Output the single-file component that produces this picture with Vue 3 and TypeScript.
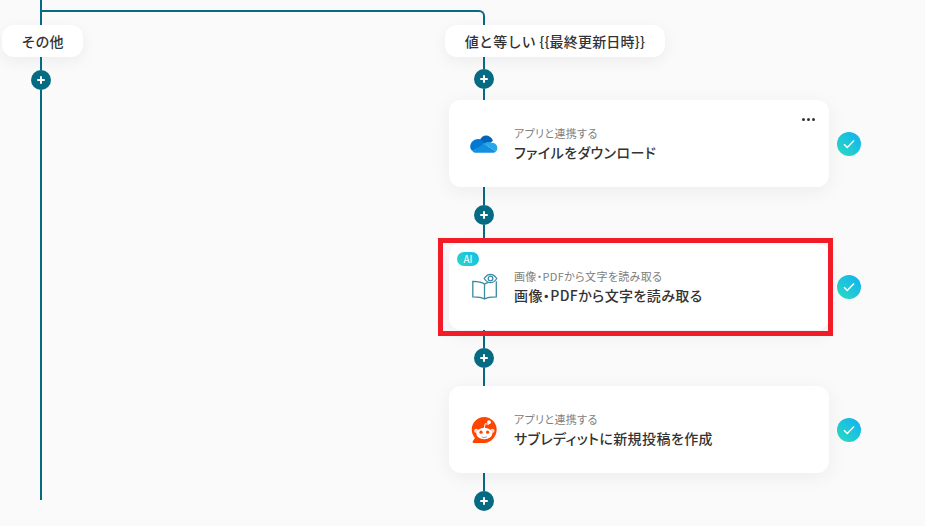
<script setup lang="ts">
interface Step {
  id: string
  icon: 'onedrive' | 'book' | 'reddit'
  caption: string
  title: string
  menu?: boolean
  ai?: boolean
}

const condition = '値と等しい {{最終更新日時}}'

const steps: Step[] = [
  { id: 'download', icon: 'onedrive', caption: 'アプリと連携する', title: 'ファイルをダウンロード', menu: true },
  { id: 'ocr', icon: 'book', caption: '画像・PDFから文字を読み取る', title: '画像・PDFから文字を読み取る', ai: true },
  { id: 'post', icon: 'reddit', caption: 'アプリと連携する', title: 'サブレディットに新規投稿を作成' },
]
</script>

<template>
  <div class="canvas">
    <div class="stub"></div>
    <div class="branch-line"></div>

    <div class="columns">
      <section class="col-left">
        <div class="pill pill-other">その他</div>
        <div class="rail">
          <span class="line h13"></span>
          <button class="plus"><span class="cross"></span></button>
          <span class="line h410"></span>
        </div>
      </section>

      <section class="col-right">
        <div class="pill pill-cond">{{ condition }}</div>
        <div class="rail">
          <span class="line h12"></span>
          <button class="plus"><span class="cross"></span></button>
          <span class="line h11"></span>
        </div>

        <template v-for="(step, i) in steps" :key="step.id">
          <div class="step-row">
            <article class="card">
              <span v-if="step.ai" class="ai-badge">AI</span>
              <span v-if="step.ai" class="highlight"></span>
              <span v-if="step.menu" class="menu"><i></i><i></i><i></i></span>

              <div class="icon">
                <svg v-if="step.icon === 'onedrive'" width="28" height="20" viewBox="0 0 28 20">
                  <path d="M9.500 6.600C11 3.300 13.300 1.500 16 1.500c3 0 5.800 2 7 5.200L17 11 9.500 8z" fill="#0364b8" />
                  <path d="M8.500 5C4 5 .2 8.300.2 12.800c0 1.800.9 3.300 2.300 4.300L12 12l2-3.500C12.600 6.300 10.700 5 8.500 5z" fill="#0078d4" />
                  <path d="M2.500 17.100 14 9.500l12 8c-1 1-2 1.300-3 1.300H5c-1 0-1.900-.6-2.500-1.700z" fill="#1490df" />
                  <path d="M14 9.500c1-.7 2.500-1.500 4-1.500 1.500 0 2.800.3 4 .8 3 0 5.300 2.200 5.300 5.200 0 1.500-.5 2.700-1.300 3.500z" fill="#28a8ea" />
                </svg>

                <svg v-else-if="step.icon === 'book'" class="book" width="30" height="30" viewBox="-1 1.5 30 30">
                  <path d="M14.500 13.500C12 11.500 8 10.800 2.800 10.800V26.300C8 26.300 12 26.800 14.500 28.500 17 26.800 21 26.300 26.300 26.300V10.800" />
                  <path d="M14.500 13.500V28.500" />
                  <path d="M14.500 13.500C15.500 12.800 16.800 12.200 18.500 11.800" />
                  <path d="M14.200 8C16 5.300 18.300 3.800 20.500 3.800S25 5.300 26.800 8C25 10.700 22.700 12.200 20.500 12.200S16 10.700 14.200 8Z" />
                  <circle cx="20.500" cy="8" r="2.300" />
                </svg>

                <svg v-else width="26" height="28" viewBox="0 0 26 28">
                  <path d="M13.200 1C6.300 1 .7 6.600.7 13.500c0 3.200 1.200 6.200 3.200 8.400L1.800 25.200c-.5.8.1 1.800 1 1.800H13.200c6.900 0 12.500-6.600 12.500-13.500S20.100 1 13.200 1z" fill="#ff4500" />
                  <path d="M13.300 12l.9-4.300 3.800.6" fill="none" stroke="#fff" stroke-width="1" />
                  <circle cx="18" cy="6.200" r="1.900" fill="#fff" />
                  <circle cx="5.200" cy="14.800" r="2.100" fill="#ffd9cc" />
                  <circle cx="21.400" cy="14.800" r="2.100" fill="#ffd9cc" />
                  <ellipse cx="13.300" cy="17.500" rx="8" ry="5.700" fill="#fff" />
                  <circle cx="10" cy="16.200" r="1.600" fill="#ff4500" />
                  <circle cx="16.600" cy="16.200" r="1.600" fill="#ff4500" />
                  <path d="M10.300 20c1.800 1.200 4.200 1.200 6 0-.6 1.600-1.800 2.100-3 2.100s-2.400-.5-3-2.100z" fill="#9aa5ad" />
                </svg>
              </div>

              <div class="labels">
                <p class="caption">{{ step.caption }}</p>
                <p class="title">{{ step.title }}</p>
              </div>
            </article>

            <span class="check">
              <svg width="12" height="10" viewBox="0 0 12 10">
                <path d="M1 5.200 4.300 8.500 11 1.500" fill="none" stroke="#fff" stroke-width="1.500" />
              </svg>
            </span>
          </div>

          <div class="rail">
            <span class="line h18"></span>
            <button class="plus"><span class="cross"></span></button>
            <span v-if="i < steps.length - 1" class="line h18"></span>
          </div>
        </template>
      </section>
    </div>
  </div>
</template>

<style>
html,
body {
  margin: 0;
  background: #fafafa;
}
</style>

<style scoped>
.canvas {
  width: 925px;
  height: 526px;
  overflow: hidden;
  background: #fafafa;
  font-family: "Noto Sans CJK JP", "Noto Sans", sans-serif;
  color: #333;
}

/* CONNECTORS */
.stub {
  width: 2px;
  height: 10px;
  margin-left: 40px;
  background: #056b82;
}

.branch-line {
  box-sizing: border-box;
  width: 445px;
  height: 15px;
  margin-left: 40px;
  border: 2px solid #056b82;
  border-bottom: none;
  border-top-right-radius: 6px;
}

.columns {
  display: flex;
}

.col-left {
  width: 445px;
  flex: none;
  box-sizing: border-box;
  padding-left: 2px;
}

.col-right {
  flex: none;
}

.rail {
  display: flex;
  flex-direction: column;
  align-items: center;
  width: 20px;
  margin-left: 29px;
}

.line {
  display: block;
  width: 2px;
  flex: none;
  background: #056b82;
}

.h11 { height: 11px; }
.h12 { height: 12px; }
.h13 { height: 13px; }
.h18 { height: 18px; }
.h410 { height: 410px; }

.plus {
  position: relative;
  width: 20px;
  height: 20px;
  flex: none;
  padding: 0;
  border: none;
  border-radius: 50%;
  background: #056b82;
}

.cross::before,
.cross::after {
  content: "";
  position: absolute;
  left: 50%;
  top: 50%;
  background: #fff;
  border-radius: 1px;
  transform: translate(-50%, -50%);
}

.cross::before {
  width: 8px;
  height: 2px;
}

.cross::after {
  width: 2px;
  height: 8px;
}

/* PILLS */
.pill {
  display: flex;
  align-items: center;
  justify-content: center;
  height: 32px;
  border-radius: 12px;
  background: #fff;
  box-shadow: 0 4px 16px rgba(0, 0, 0, 0.06);
  font-size: 14px;
  font-weight: 500;
}

.pill-other {
  width: 81px;
}

.pill-cond {
  width: 220px;
  letter-spacing: 0.2px;
}

/* CARDS */
.step-row {
  display: flex;
  align-items: center;
  gap: 8px;
  margin-left: 4px;
}

.card {
  position: relative;
  display: flex;
  align-items: center;
  width: 380px;
  height: 87px;
  box-sizing: border-box;
  padding-left: 20px;
  border-radius: 12px;
  background: #fff;
  box-shadow: 0 4px 20px rgba(0, 0, 0, 0.06);
  font-feature-settings: "palt";
}

.icon {
  display: flex;
  align-items: center;
  justify-content: center;
  width: 30px;
  flex: none;
  margin-right: 15px;
}

.book {
  fill: none;
  stroke: #3a8aa5;
  stroke-width: 1.3;
}

.labels {
  display: flex;
  flex-direction: column;
  gap: 1px;
}

.caption,
.title {
  margin: 0;
  white-space: nowrap;
}

.caption {
  font-size: 11px;
  line-height: 16px;
  letter-spacing: 0.35px;
  color: #808080;
}

.title {
  font-size: 14px;
  line-height: 20px;
  font-weight: 500;
  letter-spacing: 0.4px;
  color: #333;
}

.menu {
  position: absolute;
  top: 18px;
  right: 14px;
  display: flex;
  gap: 2px;
}

.menu i {
  width: 3px;
  height: 3px;
  border-radius: 50%;
  background: #333;
}

.ai-badge {
  position: absolute;
  top: 9px;
  left: 8px;
  width: 22px;
  height: 14px;
  border-radius: 7px;
  background: linear-gradient(45deg, #2bd4c4, #14bde8);
  color: #fff;
  font-size: 10px;
  line-height: 14px;
  text-align: center;
}

.highlight {
  position: absolute;
  z-index: 1;
  top: -5px;
  right: -4px;
  bottom: -6px;
  left: -11px;
  border: 5px solid #f11c27;
  pointer-events: none;
}

.check {
  display: flex;
  align-items: center;
  justify-content: center;
  width: 24px;
  height: 24px;
  border-radius: 50%;
  background: linear-gradient(45deg, #2ddcc0, #0fb0f2);
}
</style>
